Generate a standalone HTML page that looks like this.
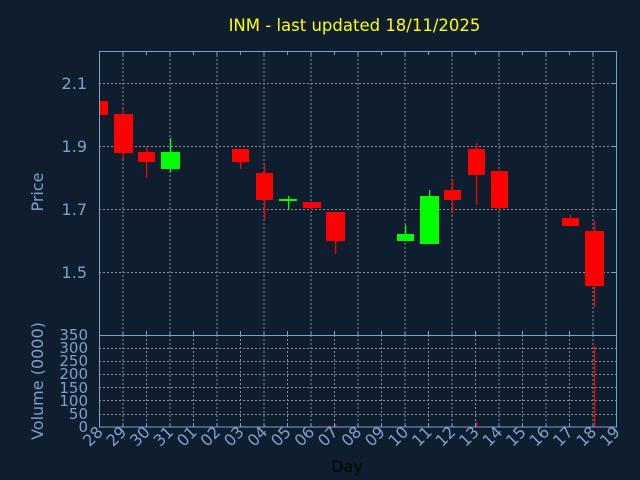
<!DOCTYPE html>
<html><head><meta charset="utf-8"><style>
html,body{margin:0;padding:0;background:#0f1e2e;}
svg{display:block;font-family:"DejaVu Sans","Liberation Sans",sans-serif;}
</style></head><body>
<svg width="640" height="480" viewBox="0 0 640 480" xmlns="http://www.w3.org/2000/svg">
<rect width="640" height="480" fill="#0f1e2e"/>
<text x="354.5" y="31" fill="#ffff00" font-size="16.5" text-anchor="middle">INM - last updated 18/11/2025</text>
<g stroke="#8a8f96" stroke-width="1" stroke-dasharray="2,2" fill="none">
<line x1="99" y1="83.5" x2="617" y2="83.5"/>
<line x1="99" y1="146.5" x2="617" y2="146.5"/>
<line x1="99" y1="209.5" x2="617" y2="209.5"/>
<line x1="99" y1="272.5" x2="617" y2="272.5"/>
<line x1="123" y1="51" x2="123" y2="335"/><line x1="170" y1="51" x2="170" y2="335"/><line x1="217" y1="51" x2="217" y2="335"/><line x1="264" y1="51" x2="264" y2="335"/><line x1="311" y1="51" x2="311" y2="335"/><line x1="358" y1="51" x2="358" y2="335"/><line x1="405" y1="51" x2="405" y2="335"/><line x1="452" y1="51" x2="452" y2="335"/><line x1="499" y1="51" x2="499" y2="335"/><line x1="546" y1="51" x2="546" y2="335"/><line x1="593" y1="51" x2="593" y2="335"/>
<line x1="99" y1="348.5" x2="617" y2="348.5"/><line x1="99" y1="361.5" x2="617" y2="361.5"/><line x1="99" y1="374.5" x2="617" y2="374.5"/><line x1="99" y1="387.5" x2="617" y2="387.5"/><line x1="99" y1="400.5" x2="617" y2="400.5"/><line x1="99" y1="414.5" x2="617" y2="414.5"/>
<line x1="123" y1="335" x2="123" y2="427"/><line x1="146.5" y1="335" x2="146.5" y2="427"/><line x1="170" y1="335" x2="170" y2="427"/><line x1="193.5" y1="335" x2="193.5" y2="427"/><line x1="217" y1="335" x2="217" y2="427"/><line x1="240.5" y1="335" x2="240.5" y2="427"/><line x1="264" y1="335" x2="264" y2="427"/><line x1="287.5" y1="335" x2="287.5" y2="427"/><line x1="311" y1="335" x2="311" y2="427"/><line x1="334.5" y1="335" x2="334.5" y2="427"/><line x1="358" y1="335" x2="358" y2="427"/><line x1="381.5" y1="335" x2="381.5" y2="427"/><line x1="405" y1="335" x2="405" y2="427"/><line x1="428.5" y1="335" x2="428.5" y2="427"/><line x1="452" y1="335" x2="452" y2="427"/><line x1="475.5" y1="335" x2="475.5" y2="427"/><line x1="499" y1="335" x2="499" y2="427"/><line x1="522.5" y1="335" x2="522.5" y2="427"/><line x1="546" y1="335" x2="546" y2="427"/><line x1="569.5" y1="335" x2="569.5" y2="427"/><line x1="593" y1="335" x2="593" y2="427"/>
</g>
<g fill="#ff0000" stroke="none">
<rect x="99" y="101" width="9" height="14"/>
<rect x="122.5" y="109" width="1.3" height="50"/><rect x="114" y="114" width="19" height="39"/>
<rect x="146" y="147" width="1.3" height="31"/><rect x="138" y="152" width="17" height="10"/>
<rect x="240" y="149" width="1.3" height="20"/><rect x="232" y="149" width="17" height="13"/>
<rect x="264" y="165" width="1.3" height="54"/><rect x="256" y="173" width="17" height="27"/>
<rect x="311" y="202" width="1.3" height="8"/><rect x="303" y="202" width="18" height="6"/>
<rect x="335" y="212" width="1.3" height="42"/><rect x="326" y="212" width="19" height="29"/>
<rect x="452" y="179" width="1.3" height="34"/><rect x="444" y="190" width="17" height="10"/>
<rect x="476" y="143" width="1.3" height="62"/><rect x="468" y="149" width="17" height="26"/>
<rect x="499" y="171" width="1.3" height="40"/><rect x="491" y="171" width="17" height="37"/>
<rect x="570" y="215" width="1.3" height="11"/><rect x="562" y="218" width="17" height="8"/>
<rect x="594" y="221" width="1.3" height="86"/><rect x="585" y="231" width="19" height="55"/>
<rect x="594" y="346" width="1.3" height="81"/>
<rect x="122.5" y="425" width="1.3" height="2"/><rect x="264" y="425" width="1.3" height="2"/><rect x="335" y="424" width="1.3" height="3"/><rect x="476" y="422" width="1.3" height="5"/>
</g>
<g fill="#00ff00" stroke="none">
<rect x="170" y="138" width="1.3" height="34"/><rect x="161" y="152" width="19" height="17"/>
<rect x="288" y="196" width="1.3" height="14"/><rect x="279" y="199" width="18" height="2"/>
<rect x="405" y="225" width="1.3" height="16"/><rect x="397" y="234" width="17" height="7"/>
<rect x="429" y="190" width="1.3" height="54"/><rect x="420" y="196" width="19" height="48"/>
</g>
<g stroke="#7f9fcf" stroke-width="1" fill="none">
<rect x="99.5" y="51.5" width="517" height="375.5"/>
<line x1="99" y1="335.5" x2="617" y2="335.5"/>
</g>
<g stroke="#7f9fcf" stroke-width="1">
<path d="M123 51v4M146.5 51v4M170 51v4M193.5 51v4M217 51v4M240.5 51v4M264 51v4M287.5 51v4M311 51v4M334.5 51v4M358 51v4M381.5 51v4M405 51v4M428.5 51v4M452 51v4M475.5 51v4M499 51v4M522.5 51v4M546 51v4M569.5 51v4M593 51v4
M123 335v-4M146.5 335v-4M170 335v-4M193.5 335v-4M217 335v-4M240.5 335v-4M264 335v-4M287.5 335v-4M311 335v-4M334.5 335v-4M358 335v-4M381.5 335v-4M405 335v-4M428.5 335v-4M452 335v-4M475.5 335v-4M499 335v-4M522.5 335v-4M546 335v-4M569.5 335v-4M593 335v-4
M123 427v-4M146.5 427v-4M170 427v-4M193.5 427v-4M217 427v-4M240.5 427v-4M264 427v-4M287.5 427v-4M311 427v-4M334.5 427v-4M358 427v-4M381.5 427v-4M405 427v-4M428.5 427v-4M452 427v-4M475.5 427v-4M499 427v-4M522.5 427v-4M546 427v-4M569.5 427v-4M593 427v-4
M617 83.5h-5M617 146.5h-5M617 209.5h-5M617 272.5h-5"/>
</g>
<g fill="#7f9fcf" font-size="16" text-anchor="end">
<text x="87" y="89">2.1</text>
<text x="87" y="152">1.9</text>
<text x="87" y="215">1.7</text>
<text x="87" y="278">1.5</text>
<g font-size="15">
<text x="88" y="340">350</text><text x="88" y="353">300</text><text x="88" y="366">250</text><text x="88" y="379">200</text><text x="88" y="393">150</text><text x="88" y="406">100</text><text x="88" y="419">50</text><text x="88" y="432">0</text>
</g>
<text transform="translate(43,192) rotate(-90)" text-anchor="middle">Price</text>
<text transform="translate(43,381) rotate(-90)" text-anchor="middle">Volume (0000)</text>
<g font-size="16">
<text transform="translate(104,433) rotate(-45)">28</text>
<text transform="translate(127.5,433) rotate(-45)">29</text>
<text transform="translate(151,433) rotate(-45)">30</text>
<text transform="translate(174.5,433) rotate(-45)">31</text>
<text transform="translate(198,433) rotate(-45)">01</text>
<text transform="translate(221.5,433) rotate(-45)">02</text>
<text transform="translate(245,433) rotate(-45)">03</text>
<text transform="translate(268.5,433) rotate(-45)">04</text>
<text transform="translate(292,433) rotate(-45)">05</text>
<text transform="translate(315.5,433) rotate(-45)">06</text>
<text transform="translate(339,433) rotate(-45)">07</text>
<text transform="translate(362.5,433) rotate(-45)">08</text>
<text transform="translate(386,433) rotate(-45)">09</text>
<text transform="translate(409.5,433) rotate(-45)">10</text>
<text transform="translate(433,433) rotate(-45)">11</text>
<text transform="translate(456.5,433) rotate(-45)">12</text>
<text transform="translate(480,433) rotate(-45)">13</text>
<text transform="translate(503.5,433) rotate(-45)">14</text>
<text transform="translate(527,433) rotate(-45)">15</text>
<text transform="translate(550.5,433) rotate(-45)">16</text>
<text transform="translate(574,433) rotate(-45)">17</text>
<text transform="translate(597.5,433) rotate(-45)">18</text>
<text transform="translate(621,433) rotate(-45)">19</text>
</g>
</g>
<text x="347" y="472" fill="#000000" font-size="16" text-anchor="middle">Day</text>
</svg>
</body></html>
